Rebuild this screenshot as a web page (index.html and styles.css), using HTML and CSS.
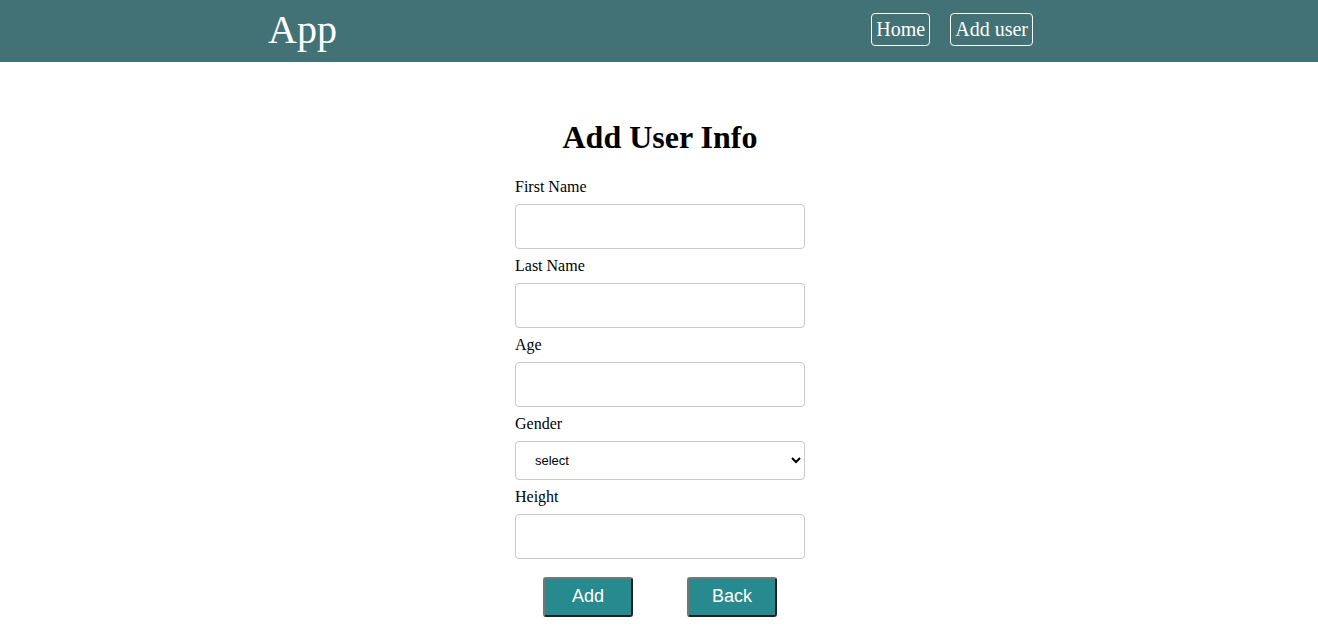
FILE: index.html
```html
<!DOCTYPE html>
<html>
<head>
<meta charset="utf-8">
<link rel="stylesheet" href="styles.css">
</head>
<body>
<header class="topbar">
  <div class="brand">App</div>
  <nav class="nav">
    <a class="nav-link" href="#">Home</a>
    <a class="nav-link" href="#">Add user</a>
  </nav>
</header>
<main class="main">
  <h1 class="title">Add User Info</h1>
  <form class="form">
    <label class="label">First Name</label>
    <input class="input" type="text">
    <label class="label">Last Name</label>
    <input class="input" type="text">
    <label class="label">Age</label>
    <input class="input" type="text">
    <label class="label">Gender</label>
    <select class="select">
      <option>select</option>
    </select>
    <label class="label">Height</label>
    <input class="input" type="text">
    <div class="actions">
      <button class="btn" type="button">Add</button>
      <button class="btn" type="button">Back</button>
    </div>
  </form>
</main>
</body>
</html>
```
FILE: styles.css
```css
html, body {
  margin: 0;
  padding: 0;
  font-family: "Liberation Serif", "Times New Roman", serif;
  background: #fff;
  color: #000;
}
.topbar {
  height: 62px;
  background: #437276;
  display: flex;
  align-items: flex-start;
  justify-content: space-between;
  padding: 7px 285px 0 268px;
  box-sizing: border-box;
}
.brand {
  font-size: 40px;
  color: #fff;
  line-height: 46px;
}
.nav {
  display: flex;
  gap: 20px;
  margin-top: 6px;
}
.nav-link {
  color: #fff;
  text-decoration: none;
  font-size: 20px;
  line-height: 23px;
  padding: 4px 4px;
  border: 1px solid #fff;
  border-radius: 4px;
}
.main {
  display: flex;
  flex-direction: column;
  align-items: center;
  padding-top: 57px;
}
.title {
  font-size: 32px;
  font-weight: bold;
  margin: 0 0 22px;
  line-height: 37px;
  padding-left: 2px;
}
.form {
  width: 290px;
  display: flex;
  flex-direction: column;
  padding-left: 2px;
}
.label {
  font-size: 16px;
  line-height: 18px;
  margin-bottom: 8px;
}
.input {
  height: 45px;
  box-sizing: border-box;
  border: 1px solid #c8c8c8;
  border-radius: 4px;
  margin: 0 0 8px;
  padding: 0 8px;
  font-size: 16px;
}
.select {
  height: 39px;
  box-sizing: border-box;
  border: 1px solid #c8c8c8;
  border-radius: 4px;
  margin: 0 0 8px;
  padding: 0 0 0 15px;
  font-family: "Liberation Sans", Arial, sans-serif;
  font-size: 13px;
  background: #fff;
  color: #000;
}
.actions {
  display: flex;
  justify-content: center;
  gap: 54px;
  margin-top: 10px;
}
.btn {
  width: 90px;
  height: 40px;
  box-sizing: border-box;
  background: #268a8f;
  color: #fff;
  border: 2px outset #767676;
  border-radius: 3px;
  font-family: "Liberation Sans", Arial, sans-serif;
  font-size: 18px;
  padding: 0 0 2px;
}
```
